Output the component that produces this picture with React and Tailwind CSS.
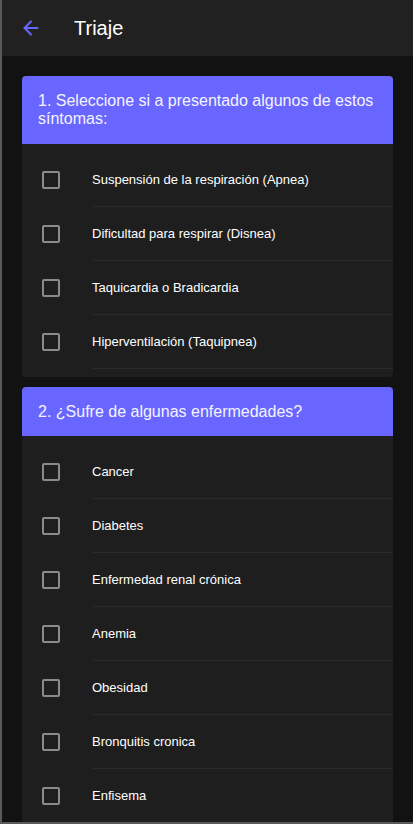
import React, { useState } from "react";
import { ArrowLeft } from "lucide-react";

const sections = [
  {
    title: "1. Seleccione si a presentado algunos de estos síntomas:",
    items: [
      "Suspensión de la respiración (Apnea)",
      "Dificultad para respirar (Disnea)",
      "Taquicardia o Bradicardia",
      "Hiperventilación (Taquipnea)",
    ],
  },
  {
    title: "2. ¿Sufre de algunas enfermedades?",
    items: [
      "Cancer",
      "Diabetes",
      "Enfermedad renal crónica",
      "Anemia",
      "Obesidad",
      "Bronquitis cronica",
      "Enfisema",
    ],
  },
];

function CheckRow({ label }) {
  const [checked, setChecked] = useState(false);
  return (
    <label className="flex h-[54px] cursor-pointer items-center">
      <span className="flex w-[70px] shrink-0 justify-start pl-5">
        <span
          onClick={() => setChecked(!checked)}
          className={
            checked
              ? "h-[18px] w-[18px] rounded-[2px] border-2 border-[#6966ff] bg-[#6966ff]"
              : "h-[18px] w-[18px] rounded-[2px] border-2 border-[#8a8a8a]"
          }
        />
      </span>
      <span className="flex h-full flex-1 items-center border-b border-[#2a2a2a] text-[13px] text-white">
        {label}
      </span>
    </label>
  );
}

export default function App() {
  return (
    <div
      className="flex h-[824px] w-[413px] flex-col overflow-hidden border-b-2 border-l-2 border-[#5a5a5a] bg-[#121212]"
      style={{ fontFamily: '"Liberation Sans", Arial, sans-serif' }}
    >
      <header className="flex h-14 shrink-0 items-center bg-[#212121]">
        <button className="ml-[17px] flex h-6 w-6 items-center justify-center text-[#6966ff]">
          <ArrowLeft size={22} strokeWidth={2.2} />
        </button>
        <h1 className="ml-[31px] text-[20px] text-white">Triaje</h1>
      </header>

      <main className="flex flex-col gap-2.5 px-5 pt-5">
        {sections.map((s) => (
          <section key={s.title} className="overflow-hidden rounded bg-[#1e1e1e]">
            <div className="bg-[#6966ff] px-4 pb-[15px] pt-4 text-[16px] leading-[1.15] text-[#f4f4ff]">
              {s.title}
            </div>
            <div className="pb-2 pt-[9px]">
              {s.items.map((it) => (
                <CheckRow key={it} label={it} />
              ))}
            </div>
          </section>
        ))}
      </main>
    </div>
  );
}
